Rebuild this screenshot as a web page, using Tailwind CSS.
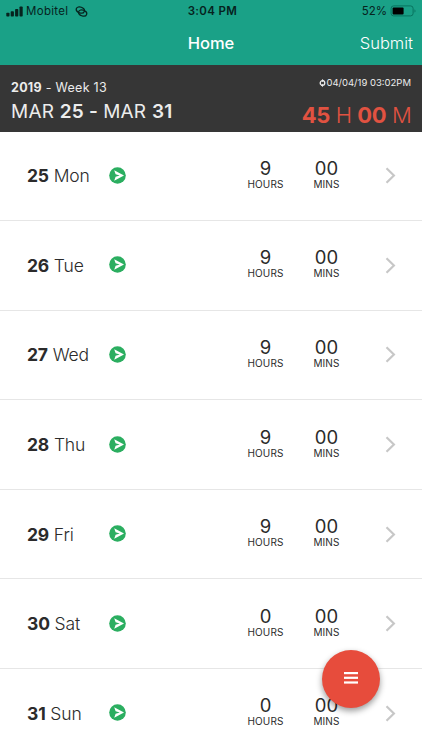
<!DOCTYPE html>
<html lang="en">
<head>
<meta charset="utf-8">
<meta name="viewport" content="width=device-width, initial-scale=1">
<title>Home</title>
<script src="https://cdn.jsdelivr.net/npm/@tailwindcss/browser@4"></script>
</head>
<body class="h-[750px] overflow-hidden bg-white font-['Inter','Liberation_Sans',sans-serif] text-[#2b2b2b]">
<div class="relative flex h-[750px] w-[422px] flex-col overflow-hidden">
  <header class="h-[65px] shrink-0 bg-[#1aa187]">
    <div class="grid h-[22px] grid-cols-[1fr_auto_1fr] items-center px-[6px] text-[11.5px] leading-[22px] text-[#06231e]">
      <div class="flex items-center">
        <svg class="h-[11px] w-[17px]" viewBox="0 0 17 11" fill="currentColor"><rect x="0.3" y="6.8" width="3.2" height="3.7" rx=".8"/><rect x="4.7" y="5.3" width="3.2" height="5.2" rx=".8"/><rect x="9.1" y="3" width="3.2" height="7.5" rx=".8"/><rect x="13.5" y="0.5" width="3.2" height="10" rx=".8"/></svg>
        <span class="ml-[3px] tracking-[0.3px]">Mobitel</span>
        <svg class="ml-[7px] h-[11px] w-[13px]" viewBox="0 0 13 11" fill="none" stroke="currentColor" stroke-width="1.200" stroke-linecap="round"><g transform="rotate(20 6.500 5.500)"><ellipse cx="4.900" cy="4.500" rx="4.200" ry="2.900"/><ellipse cx="8.100" cy="6.500" rx="4.200" ry="2.900"/></g></svg>
      </div>
      <div class="pl-[3px] text-[11.5px] font-semibold tracking-[0.35px]">3:04 PM</div>
      <div class="flex items-center justify-end">
        <span>52%</span>
        <svg class="ml-[3px] h-[12px] w-[26px]" viewBox="0 0 26 12"><rect x="1.100" y=".9" width="22" height="10" rx="2.500" fill="none" stroke="#08735f" stroke-width="1"/><rect x="2.600" y="2.400" width="11" height="7" rx="1" fill="#000"/><path d="M24.500 4.200c1.300.6 1.300 2.800 0 3.400z" fill="#08735f"/></svg>
      </div>
    </div>
    <div class="grid h-[43px] grid-cols-[1fr_auto_1fr] items-center px-[9px] text-[16.5px] leading-[43px] text-white">
      <span></span>
      <h1 class="font-medium">Home</h1>
      <span class="text-right font-light">Submit</span>
    </div>
  </header>
  <section class="flex h-[66.5px] shrink-0 justify-between bg-[#363636] pr-[11px] pl-[11px] text-[#ececec]">
    <div class="pt-[15px]">
      <div class="text-[12.5px] leading-[16px] tracking-[0.28px]"><b class="font-bold">2019</b> - Week 13</div>
      <div class="mt-[5px] text-[19px] leading-[22px] tracking-[0.23px]">MAR <b class="font-semibold">25 - </b>MAR <b class="font-semibold">31</b></div>
    </div>
    <div class="flex flex-col items-end pt-[12px]">
      <div class="flex items-center text-[9.5px] leading-[12px]">
        <svg class="h-[8px] w-[7px]" viewBox="0 0 7 8" fill="none" stroke="currentColor" stroke-width="1.300"><circle cx="3.500" cy="4" r="2.300"/><path d="M3 0v3.200L5.100 1.600zM4 4.800V8L1.900 6.400z" fill="currentColor" stroke="none"/></svg>
        <span>04/04/19 03:02PM</span>
      </div>
      <div class="mt-[12px] -mr-[0.4px] text-[22px] leading-[28px] font-light tracking-[-0.4px] text-[#e15241]"><b class="font-bold">45</b> H <b class="font-bold">00</b> M</div>
    </div>
  </section>
  <main id="days" class="flex flex-col"></main>
  <button class="absolute top-[650px] left-[322px] flex size-[58px] items-center justify-center rounded-full bg-[#e74c3c] shadow-[0_3px_6px_rgba(0,0,0,0.4)]" aria-label="Menu">
    <svg class="mb-[3px] h-[12px] w-[14px]" viewBox="0 0 14 12" fill="#fff"><rect y="0" width="14" height="2.200"/><rect y="4.700" width="14" height="2.200"/><rect y="9.400" width="14" height="2.200"/></svg>
  </button>
</div>
<script>
const days = [[25,'Mon',9],[26,'Tue',9],[27,'Wed',9],[28,'Thu',9],[29,'Fri',9],[30,'Sat',0],[31,'Sun',0]];
document.getElementById('days').innerHTML = days.map(([date, name, hours]) => `
  <article class="flex h-[89.6px] shrink-0 items-center border-b border-[#e6e6e6] bg-white pl-[27px]">
    <div class="w-[82px] pt-[1px] text-[17.5px] leading-[24px] font-light tracking-[-0.15px]"><b class="font-bold">${date}</b> ${name}</div>
    <svg class="mb-[1px] size-[17px]" viewBox="0 0 17 17"><circle cx="8.500" cy="8.500" r="8.300" fill="#2bae60"/><path d="M5.200 3.200 15 8.500 5.200 13.800 6.600 9.700 10.700 8.500 6.600 7.300z" fill="#fff"/></svg>
    <div class="mb-[3px] ml-[115px] w-[49px] text-center">
      <div class="text-[18.5px] leading-[19px]">${hours}</div>
      <div class="mt-[1px] text-[10px] leading-[11px] tracking-[0.1px]">HOURS</div>
    </div>
    <div class="mb-[3px] ml-[12px] w-[49px] text-center">
      <div class="text-[18.5px] leading-[19px]">00</div>
      <div class="mt-[1px] text-[10px] leading-[11px] tracking-[0.1px]">MINS</div>
    </div>
    <svg class="ml-[34px] h-[17px] w-[11px]" viewBox="0 0 11 17" fill="none" stroke="#c7c7c7" stroke-width="2.200"><path d="M1.500 1.300 8.900 8.500 1.500 15.700"/></svg>
  </article>`).join('');
</script>
</body>
</html>
